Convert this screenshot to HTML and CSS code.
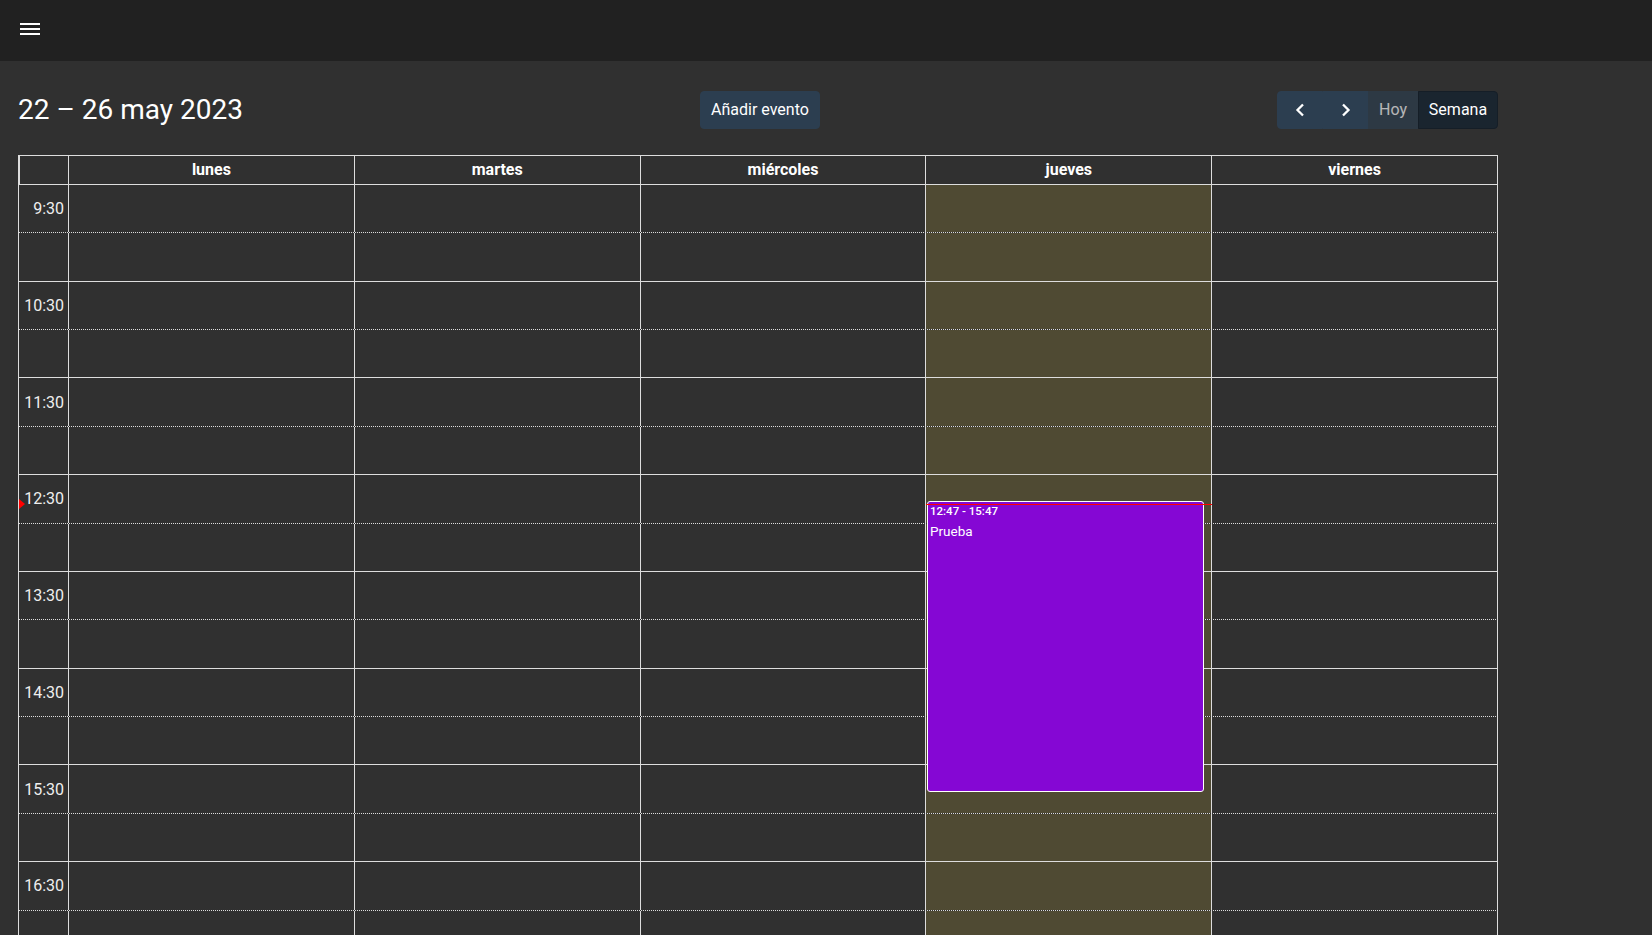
FILE: index.html
```html
<!DOCTYPE html>
<html lang="es">
<head>
<meta charset="utf-8">
<title>Calendario</title>
<link rel="stylesheet" href="styles.css">
</head>
<body>
<div class="app">
  <header class="topbar">
    <svg class="menu" width="20" height="12" viewBox="0 0 20 12" aria-hidden="true">
      <rect x="0" y="0" width="20" height="2" fill="#fff"/>
      <rect x="0" y="5" width="20" height="2" fill="#fff"/>
      <rect x="0" y="10" width="20" height="2" fill="#fff"/>
    </svg>
  </header>
  <main class="page">
    <div class="calendar">
      <div class="toolbar">
        <h2 class="title">22 – 26 may 2023</h2>
        <button class="btn">Añadir evento</button>
        <div class="btn-group">
          <button class="btn btn-prev" aria-label="anterior">
            <svg width="10" height="14" viewBox="0 0 10 14"><polyline points="8,1.5 2.5,7 8,12.5" fill="none" stroke="#fff" stroke-width="2.3"/></svg>
          </button>
          <button class="btn btn-next" aria-label="siguiente">
            <svg width="10" height="14" viewBox="0 0 10 14"><polyline points="2,1.5 7.5,7 2,12.5" fill="none" stroke="#fff" stroke-width="2.3"/></svg>
          </button>
          <button class="btn btn-today" disabled>Hoy</button>
          <button class="btn btn-week">Semana</button>
        </div>
      </div>

      <div class="grid">
        <div class="row head">
          <div class="cell"></div>
          <div class="cell day">lunes</div>
          <div class="cell day">martes</div>
          <div class="cell day">miércoles</div>
          <div class="cell day">jueves</div>
          <div class="cell day">viernes</div>
        </div>
        <div class="body">
          <div class="row major"><div class="lbl">9:30</div><div class="cell"></div><div class="cell"></div><div class="cell"></div><div class="cell today"></div><div class="cell"></div></div>
          <div class="row minor"><div class="lbl"></div><div class="cell"></div><div class="cell"></div><div class="cell"></div><div class="cell today"></div><div class="cell"></div></div>
          <div class="row major"><div class="lbl">10:30</div><div class="cell"></div><div class="cell"></div><div class="cell"></div><div class="cell today"></div><div class="cell"></div></div>
          <div class="row minor"><div class="lbl"></div><div class="cell"></div><div class="cell"></div><div class="cell"></div><div class="cell today"></div><div class="cell"></div></div>
          <div class="row major"><div class="lbl">11:30</div><div class="cell"></div><div class="cell"></div><div class="cell"></div><div class="cell today"></div><div class="cell"></div></div>
          <div class="row minor"><div class="lbl"></div><div class="cell"></div><div class="cell"></div><div class="cell"></div><div class="cell today"></div><div class="cell"></div></div>
          <div class="row major"><div class="lbl">12:30</div><div class="cell"></div><div class="cell"></div><div class="cell"></div><div class="cell today"></div><div class="cell"></div></div>
          <div class="row minor"><div class="lbl"></div><div class="cell"></div><div class="cell"></div><div class="cell"></div><div class="cell today"></div><div class="cell"></div></div>
          <div class="row major"><div class="lbl">13:30</div><div class="cell"></div><div class="cell"></div><div class="cell"></div><div class="cell today"></div><div class="cell"></div></div>
          <div class="row minor"><div class="lbl"></div><div class="cell"></div><div class="cell"></div><div class="cell"></div><div class="cell today"></div><div class="cell"></div></div>
          <div class="row major"><div class="lbl">14:30</div><div class="cell"></div><div class="cell"></div><div class="cell"></div><div class="cell today"></div><div class="cell"></div></div>
          <div class="row minor"><div class="lbl"></div><div class="cell"></div><div class="cell"></div><div class="cell"></div><div class="cell today"></div><div class="cell"></div></div>
          <div class="row major"><div class="lbl">15:30</div><div class="cell"></div><div class="cell"></div><div class="cell"></div><div class="cell today"></div><div class="cell"></div></div>
          <div class="row minor"><div class="lbl"></div><div class="cell"></div><div class="cell"></div><div class="cell"></div><div class="cell today"></div><div class="cell"></div></div>
          <div class="row major"><div class="lbl">16:30</div><div class="cell"></div><div class="cell"></div><div class="cell"></div><div class="cell today"></div><div class="cell"></div></div>
          <div class="row minor"><div class="lbl"></div><div class="cell"></div><div class="cell"></div><div class="cell"></div><div class="cell today"></div><div class="cell"></div></div>

          <div class="event">
            <div class="event-time">12:47 - 15:47</div>
            <div class="event-title">Prueba</div>
          </div>
          <div class="now-arrow"></div>
          <div class="now-line"></div>
        </div>
      </div>
    </div>
  </main>
</div>
</body>
</html>
```

FILE: styles.css
```css
html, body {
  margin: 0;
  padding: 0;
  height: 100%;
  overflow: hidden;
}

body {
  background: #303030;
  color: #fff;
  font-family: Roboto, "Liberation Sans", Arial, sans-serif;
  font-size: 16px;
}

.app {
  height: 100vh;
  overflow: hidden;
  display: flex;
  flex-direction: column;
}

.topbar {
  background: #212121;
  height: 61px;
  flex: none;
  box-sizing: border-box;
  padding: 23px 20px 0;
  display: flex;
  align-items: flex-start;
}

.menu {
  display: block;
}

.page {
  flex: 1;
  padding: 30px 0 0 18px;
  background: #303030;
  overflow: hidden;
}

.calendar {
  width: 1480px;
}

.toolbar {
  display: flex;
  justify-content: space-between;
  align-items: center;
  height: 38px;
  margin-bottom: 26px;
}

.title {
  margin: 0;
  font-size: 28px;
  font-weight: 400;
  line-height: 38px;
  color: #fff;
}

.btn {
  font-family: Roboto, "Liberation Sans", Arial, sans-serif;
  font-size: 16px;
  line-height: 24px;
  padding: 6px 10.4px;
  background: #2c3e50;
  border: 1px solid #2c3e50;
  color: #fff;
  border-radius: 4px;
  cursor: pointer;
}

.btn-group {
  display: flex;
}

.btn-group .btn {
  border-radius: 0;
  display: flex;
  align-items: center;
  justify-content: center;
  padding: 6px 0;
  height: 38px;
  box-sizing: border-box;
}

.btn-prev {
  width: 46px;
  border-top-left-radius: 4px !important;
  border-bottom-left-radius: 4px !important;
}

.btn-next {
  width: 45px;
}

.btn-prev svg,
.btn-next svg {
  display: block;
}

.btn-today {
  width: 50px;
  opacity: 0.65;
  cursor: default;
}

.btn-week {
  width: 80px;
  background: #1a252f;
  border-color: #151e27;
  border-top-right-radius: 4px !important;
  border-bottom-right-radius: 4px !important;
}

.grid {
  width: 1480px;
}

.row {
  display: grid;
  grid-template-columns: 49px repeat(5, 1fr);
  border-left: 1px solid #ddd;
  border-right: 1px solid #ddd;
  box-sizing: border-box;
}

.head {
  height: 28.8px;
  border-top: 1px solid #ddd;
}

.head .cell {
  display: flex;
  align-items: center;
  justify-content: center;
  font-weight: 700;
  font-size: 16px;
  color: #fff;
}

.cell {
  border-left: 1px solid #ddd;
}

.body {
  position: relative;
}

.body .row {
  height: 48.4px;
}

.major {
  border-top: 1px solid #ddd;
}

.minor {
  border-top: 1px dotted #ddd;
}

.lbl {
  display: flex;
  align-items: center;
  justify-content: flex-end;
  padding-right: 4px;
  font-size: 16px;
  color: #eee;
}

.today {
  background: #4f4a33;
}

.event {
  position: absolute;
  left: 909px;
  top: 317px;
  width: 277px;
  height: 291px;
  box-sizing: border-box;
  background: #8507d4;
  border: 1px solid #fff;
  border-radius: 3px;
  padding: 2px 2px 0;
  color: #fff;
  z-index: 2;
}

.event-time {
  font-size: 11.5px;
  line-height: 14px;
  font-weight: 500;
  margin-bottom: 5px;
}

.event-title {
  font-size: 13.5px;
  line-height: 17px;
  font-weight: 400;
}

.now-line {
  position: absolute;
  left: 908px;
  top: 320px;
  width: 286px;
  border-top: 1px solid #f00;
  z-index: 3;
}

.now-arrow {
  position: absolute;
  left: 1px;
  top: 315px;
  width: 0;
  height: 0;
  border-style: solid;
  border-width: 5px 0 5px 6px;
  border-color: transparent transparent transparent #f00;
  z-index: 3;
}
```
